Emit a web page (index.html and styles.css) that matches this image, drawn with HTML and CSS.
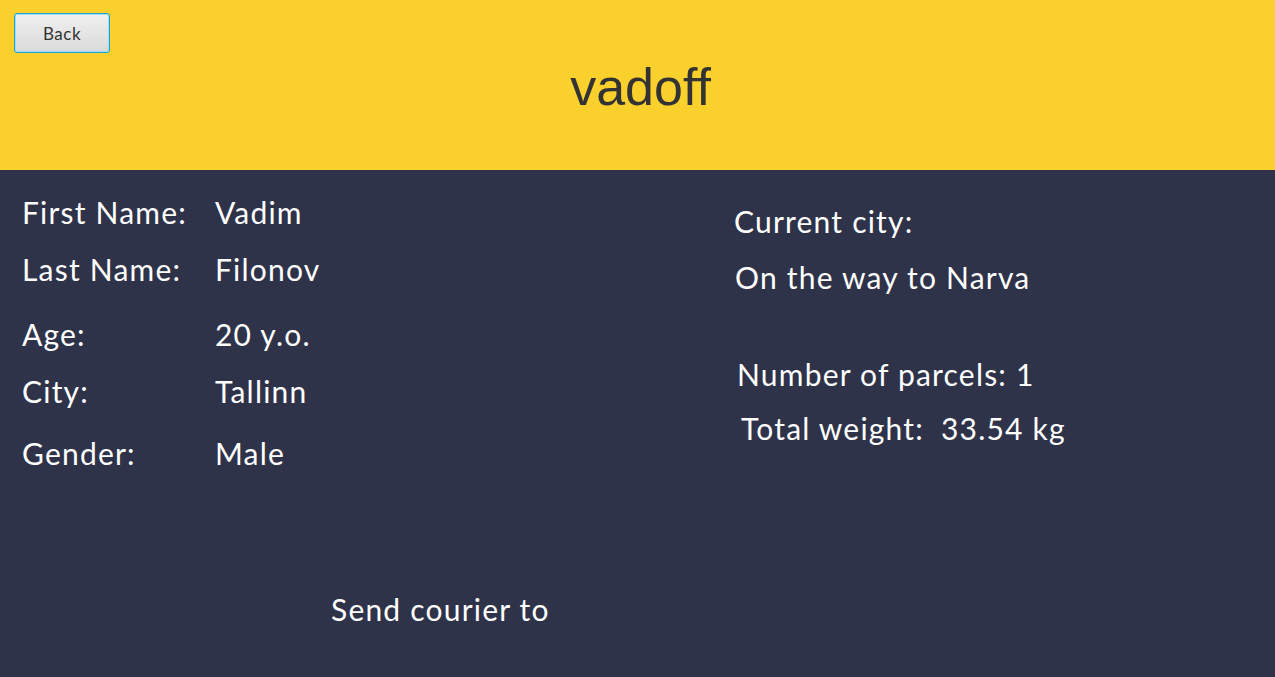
FILE: index.html
```html
<!DOCTYPE html>
<html lang="en">
<head>
<meta charset="utf-8">
<title>vadoff</title>
<link rel="stylesheet" href="styles.css">
</head>
<body>
<header class="header">
  <button class="back-btn" type="button">Back</button>
  <h1 class="title">vadoff</h1>
</header>
<main class="main">
  <section class="info">
    <div class="info-row"><span class="label">First Name:</span><span class="value">Vadim</span></div>
    <div class="info-row"><span class="label">Last Name:</span><span class="value">Filonov</span></div>
    <div class="info-row info-row--gap"><span class="label">Age:</span><span class="value">20 y.o.</span></div>
    <div class="info-row"><span class="label">City:</span><span class="value">Tallinn</span></div>
    <div class="info-row info-row--gap2"><span class="label">Gender:</span><span class="value">Male</span></div>
  </section>
  <section class="status">
    <div class="status-line">Current city:</div>
    <div class="status-line status-line--city">On the way to Narva</div>
    <div class="status-line status-line--parcels">Number of parcels: 1</div>
    <div class="status-line status-line--weight"><span class="weight-label">Total weight:</span><span>33.54 kg</span></div>
  </section>
  <div class="send">Send courier to</div>
</main>
</body>
</html>
```

FILE: styles.css
```css
html, body {
  margin: 0;
  padding: 0;
}
body {
  background: #2f3349;
  width: 1275px;
  height: 677px;
  overflow: hidden;
  font-family: "Lato", "Noto Sans", sans-serif;
  color: #ffffff;
}
.header {
  background: #f9d02c;
  height: 170px;
  box-sizing: border-box;
  padding: 13px 14px 0;
  display: flex;
  flex-direction: column;
}
.back-btn {
  width: 96px;
  height: 40px;
  box-sizing: border-box;
  border: 1px solid #1aa6d8;
  border-radius: 3px;
  background: linear-gradient(#f0f0f0, #dadada);
  box-shadow: inset 0 0 0 1px #9fdcf0;
  font-family: "Lato", "Noto Sans", sans-serif;
  font-size: 17px;
  letter-spacing: 0.5px;
  color: #333333;
  padding: 0;
  cursor: pointer;
}
.title {
  margin: 4px 0 0;
  text-align: center;
  font-family: "Liberation Sans", Arial, sans-serif;
  font-weight: normal;
  font-size: 52px;
  line-height: 60px;
  color: #333333;
  padding-left: 6px;
}
.main {
  display: grid;
  grid-template-columns: 712px 1fr;
  padding: 22px 0 0 22px;
  font-size: 30px;
  letter-spacing: 1.2px;
}
.info {
  display: flex;
  flex-direction: column;
}
.info-row {
  display: flex;
  height: 57px;
  line-height: 40px;
}
.info-row--gap {
  margin-top: 8px;
}
.info-row--gap2 {
  margin-top: 5px;
}
.label {
  width: 193px;
}
.status {
  display: flex;
  flex-direction: column;
  padding-top: 9px;
}
.status-line {
  line-height: 40px;
  height: 56px;
}
.status-line--city {
  padding-left: 1px;
  height: 97px;
}
.status-line--parcels {
  padding-left: 3px;
  height: 54px;
}
.status-line--weight {
  padding-left: 7px;
  display: flex;
}
.weight-label {
  width: 200px;
}
.send {
  grid-column: 1 / -1;
  padding-left: 309px;
  margin-top: 99px;
  line-height: 40px;
}
```
